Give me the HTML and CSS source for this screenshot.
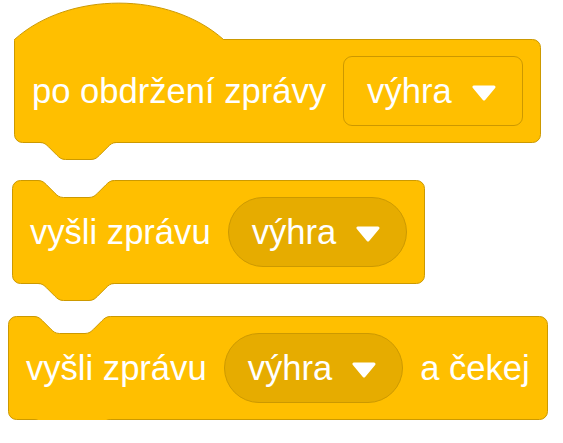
FILE: index.html
```html
<!DOCTYPE html>
<html lang="cs">
<head>
<meta charset="utf-8">
<title>Scratch bloky</title>
<link rel="stylesheet" href="styles.css">
</head>
<body>
<div class="script">
  <div class="block hat">
    <svg class="dome" width="214" height="40" viewBox="0 0 214 40">
      <path d="M0.5,37.5 C54.5,-11 155,-11 209.5,37.5 L209.5,39 L0.5,39 Z" fill="#FFBF00"/>
      <path d="M0.5,37.5 C54.5,-11 155,-11 209.5,37.5" fill="none" stroke="#CC9900" stroke-width="1"/>
    </svg>
    <span class="label">po obdržení zprávy</span>
    <div class="field">
      <span class="label">výhra</span>
      <svg class="arrow" width="24" height="16" viewBox="0 0 24 16"><path d="M2,2 L22,2 L12,14 Z" fill="#fff" stroke="#fff" stroke-width="3" stroke-linejoin="round"/></svg>
    </div>
    <svg class="tab" width="80" height="22" viewBox="0 0 80 22">
      <g transform="translate(0,0.5) scale(2.125)">
        <path d="M0,-0.3 L0,0 c2,0 3,1 4,2 l4,4 c1,1 2,2 4,2 h12 c2,0 3,-1 4,-2 l4,-4 c1,-1 2,-2 4,-2 L36,-0.3 Z" fill="#FFBF00"/>
        <path d="M0,0 c2,0 3,1 4,2 l4,4 c1,1 2,2 4,2 h12 c2,0 3,-1 4,-2 l4,-4 c1,-1 2,-2 4,-2" fill="none" stroke="#CC9900" stroke-width="1" vector-effect="non-scaling-stroke"/>
      </g>
    </svg>
  </div>

  <div class="block send">
    <svg class="notch" width="80" height="22" viewBox="0 0 80 22">
      <g transform="translate(0,0.5) scale(2.125)">
        <path d="M0,-0.3 L0,0 c2,0 3,1 4,2 l4,4 c1,1 2,2 4,2 h12 c2,0 3,-1 4,-2 l4,-4 c1,-1 2,-2 4,-2 L36,-0.3 Z" fill="#FFFFFF"/>
        <path d="M0,0 c2,0 3,1 4,2 l4,4 c1,1 2,2 4,2 h12 c2,0 3,-1 4,-2 l4,-4 c1,-1 2,-2 4,-2" fill="none" stroke="#CC9900" stroke-width="1" vector-effect="non-scaling-stroke"/>
      </g>
    </svg>
    <span class="label">vyšli zprávu</span>
    <div class="oval">
      <span class="label">výhra</span>
      <svg class="arrow" width="24" height="16" viewBox="0 0 24 16"><path d="M2,2 L22,2 L12,14 Z" fill="#fff" stroke="#fff" stroke-width="3" stroke-linejoin="round"/></svg>
    </div>
    <svg class="tab" width="80" height="22" viewBox="0 0 80 22">
      <g transform="translate(0,0.5) scale(2.125)">
        <path d="M0,-0.3 L0,0 c2,0 3,1 4,2 l4,4 c1,1 2,2 4,2 h12 c2,0 3,-1 4,-2 l4,-4 c1,-1 2,-2 4,-2 L36,-0.3 Z" fill="#FFBF00"/>
        <path d="M0,0 c2,0 3,1 4,2 l4,4 c1,1 2,2 4,2 h12 c2,0 3,-1 4,-2 l4,-4 c1,-1 2,-2 4,-2" fill="none" stroke="#CC9900" stroke-width="1" vector-effect="non-scaling-stroke"/>
      </g>
    </svg>
  </div>

  <div class="block send-wait">
    <svg class="notch" width="80" height="22" viewBox="0 0 80 22">
      <g transform="translate(0,0.5) scale(2.125)">
        <path d="M0,-0.3 L0,0 c2,0 3,1 4,2 l4,4 c1,1 2,2 4,2 h12 c2,0 3,-1 4,-2 l4,-4 c1,-1 2,-2 4,-2 L36,-0.3 Z" fill="#FFFFFF"/>
        <path d="M0,0 c2,0 3,1 4,2 l4,4 c1,1 2,2 4,2 h12 c2,0 3,-1 4,-2 l4,-4 c1,-1 2,-2 4,-2" fill="none" stroke="#CC9900" stroke-width="1" vector-effect="non-scaling-stroke"/>
      </g>
    </svg>
    <span class="label">vyšli zprávu</span>
    <div class="oval">
      <span class="label">výhra</span>
      <svg class="arrow" width="24" height="16" viewBox="0 0 24 16"><path d="M2,2 L22,2 L12,14 Z" fill="#fff" stroke="#fff" stroke-width="3" stroke-linejoin="round"/></svg>
    </div>
    <span class="label">a čekej</span>
    <svg class="tab" width="80" height="22" viewBox="0 0 80 22">
      <g transform="translate(0,0.5) scale(2.125)">
        <path d="M0,-0.3 L0,0 c2,0 3,1 4,2 l4,4 c1,1 2,2 4,2 h12 c2,0 3,-1 4,-2 l4,-4 c1,-1 2,-2 4,-2 L36,-0.3 Z" fill="#FFBF00"/>
        <path d="M0,0 c2,0 3,1 4,2 l4,4 c1,1 2,2 4,2 h12 c2,0 3,-1 4,-2 l4,-4 c1,-1 2,-2 4,-2" fill="none" stroke="#CC9900" stroke-width="1" vector-effect="non-scaling-stroke"/>
      </g>
    </svg>
  </div>
</div>
</body>
</html>
```

FILE: styles.css
```css
* {
  box-sizing: border-box;
}

body {
  margin: 0;
  background: #ffffff;
  font-family: "Liberation Sans", Arial, sans-serif;
}

.script {
  display: flex;
  flex-direction: column;
  align-items: flex-start;
}

.block {
  position: relative;
  display: flex;
  align-items: center;
  gap: 17px;
  height: 104px;
  padding: 0 17px;
  background: #FFBF00;
  border: 1px solid #CC9900;
  border-radius: 8.5px;
  color: #ffffff;
  font-size: 34.6px;
}

.hat {
  margin: 39px 0 0 14px;
  border-top-left-radius: 0;
}

.send {
  margin: 37px 0 0 12px;
}

.send-wait {
  margin: 32px 0 0 8px;
}

.label {
  white-space: nowrap;
  line-height: 1;
}

.field,
.oval {
  display: flex;
  align-items: center;
  gap: 20px;
  height: 70px;
  padding: 0 26px 0 23px;
}

.field {
  border: 1px solid rgba(0, 0, 0, 0.2);
  border-radius: 9px;
}

.oval {
  background: #E6AC00;
  border: 1px solid #CC9900;
  border-radius: 35px;
}

.arrow {
  display: block;
  margin-top: 4px;
}

.dome {
  position: absolute;
  top: -38px;
  left: -1px;
}

.notch {
  position: absolute;
  top: -1px;
  left: 24.5px;
}

.tab {
  position: absolute;
  top: 100%;
  left: 24.5px;
}
```
